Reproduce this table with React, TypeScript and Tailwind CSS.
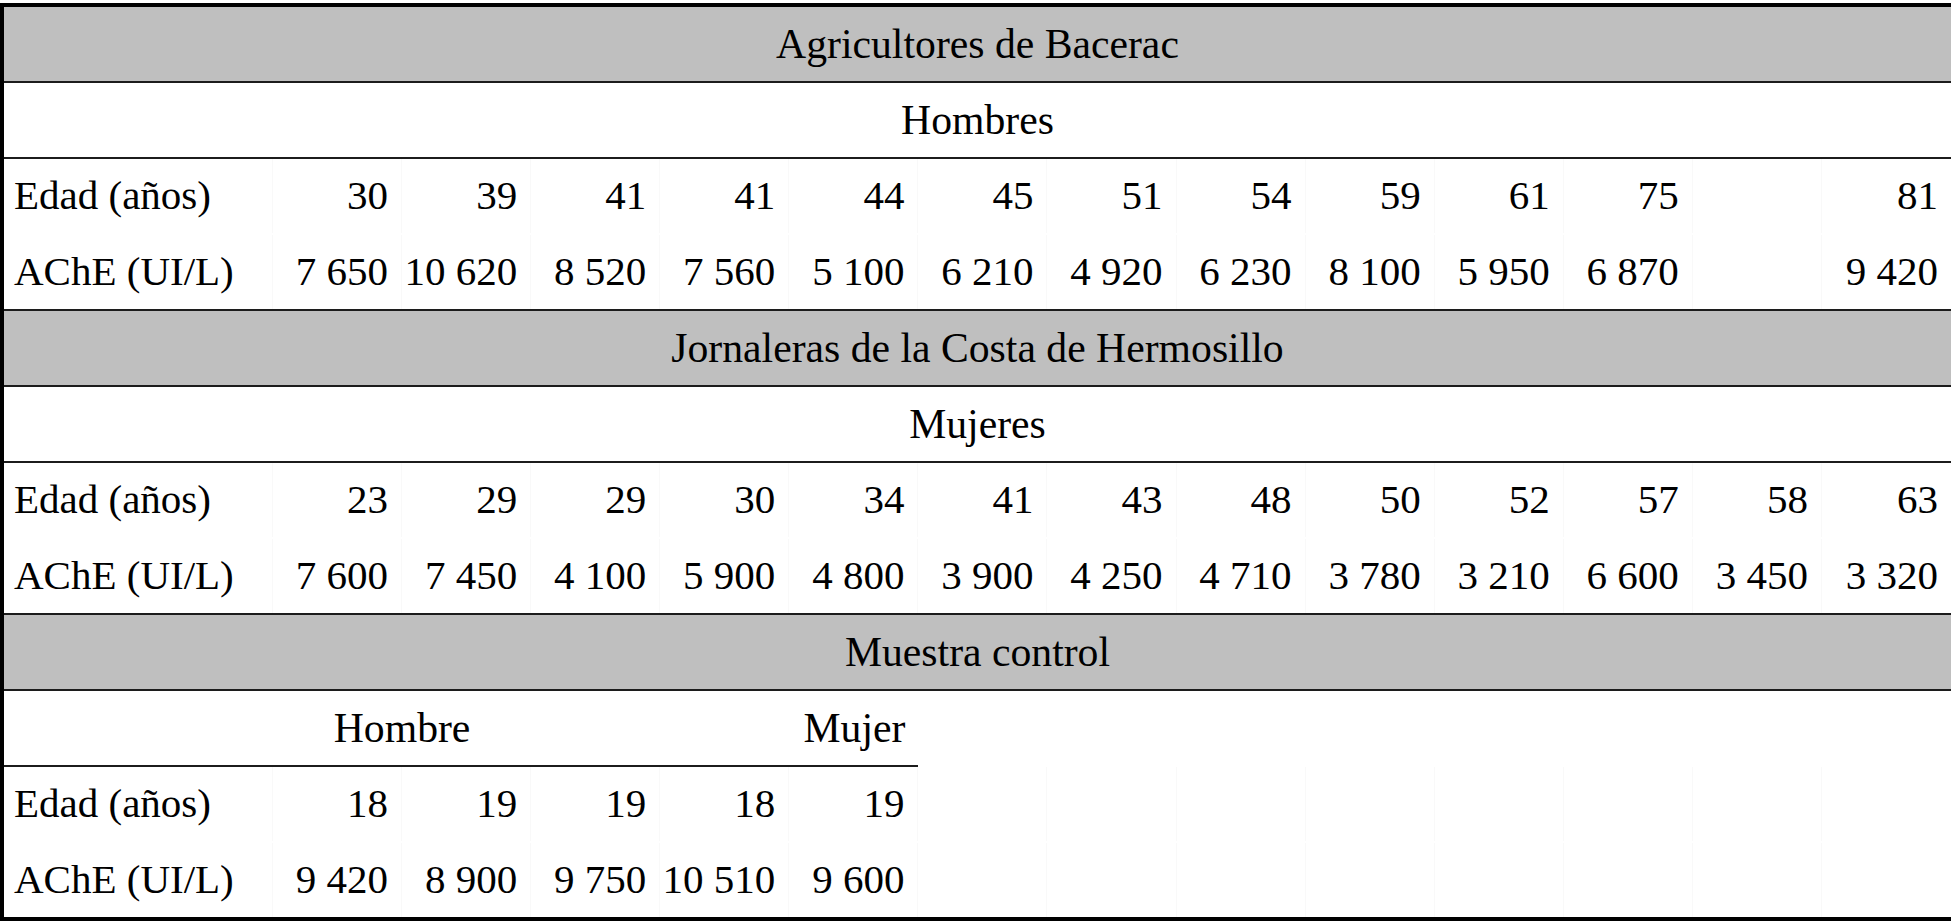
import React from "react";

const LINE = "border-[#1c1c1c]";

type Row = { label: string; values: (string | null)[] };

const agEdad: Row = {
  label: "Edad (años)",
  values: ["30", "39", "41", "41", "44", "45", "51", "54", "59", "61", "75", null, "81"],
};
const agAche: Row = {
  label: "AChE (UI/L)",
  values: ["7 650", "10 620", "8 520", "7 560", "5 100", "6 210", "4 920", "6 230", "8 100", "5 950", "6 870", null, "9 420"],
};
const joEdad: Row = {
  label: "Edad (años)",
  values: ["23", "29", "29", "30", "34", "41", "43", "48", "50", "52", "57", "58", "63"],
};
const joAche: Row = {
  label: "AChE (UI/L)",
  values: ["7 600", "7 450", "4 100", "5 900", "4 800", "3 900", "4 250", "4 710", "3 780", "3 210", "6 600", "3 450", "3 320"],
};
const coEdad: Row = {
  label: "Edad (años)",
  values: ["18", "19", "19", "18", "19", null, null, null, null, null, null, null, null],
};
const coAche: Row = {
  label: "AChE (UI/L)",
  values: ["9 420", "8 900", "9 750", "10 510", "9 600", null, null, null, null, null, null, null, null],
};

const GRID = "grid grid-cols-[269px_repeat(13,minmax(0,1fr))]";
const FONT = "font-['Liberation_Serif','Times_New_Roman',serif]";

function TitleRow({ text, gray }: { text: string; gray?: boolean }) {
  return (
    <div className={`${GRID} h-[76px] border-b-2 ${LINE} ${gray ? "bg-[#bfbfbf]" : "bg-white"}`}>
      <div className="col-span-14 flex items-center justify-center text-[41.7px]">{text}</div>
    </div>
  );
}

function DataRow({ row, border, last }: { row: Row; border?: boolean; last?: boolean }) {
  const h = last ? "h-[74px]" : "h-[76px]";
  const b = last ? "" : border ? "border-b-2 " + LINE : "border-b-2 border-transparent";
  return (
    <div className={`${GRID} ${h} ${b} bg-white text-[41px]`}>
      <div className="flex items-center pl-[10px] border-r border-[#f9f9f9]">{row.label}</div>
      {row.values.map((v, i) => (
        <div
          key={i}
          className="flex items-center justify-end pr-[13px] border-r border-[#f9f9f9] last:border-r-0 whitespace-nowrap"
        >
          {v ?? ""}
        </div>
      ))}
    </div>
  );
}

export default function App() {
  return (
    <div className={`w-[1951px] h-[923px] bg-white overflow-hidden text-black ${FONT}`}>
      <div className="mt-[3px] border-l-4 border-t-4 border-b-4 border-black">
        <TitleRow text="Agricultores de Bacerac" gray />
        <TitleRow text="Hombres" />
        <DataRow row={agEdad} />
        <DataRow row={agAche} border />
        <TitleRow text="Jornaleras de la Costa de Hermosillo" gray />
        <TitleRow text="Mujeres" />
        <DataRow row={joEdad} />
        <DataRow row={joAche} border />
        <TitleRow text="Muestra control" gray />
        <div className={`${GRID} h-[76px] bg-white text-[41.7px]`}>
          <div className={`border-b-2 ${LINE}`} />
          <div className={`col-span-2 flex items-center justify-center border-b-2 ${LINE}`}>Hombre</div>
          <div className={`col-span-3 flex items-center justify-end pr-[13px] border-b-2 ${LINE}`}>Mujer</div>
          <div className="col-span-8 border-b-2 border-transparent" />
        </div>
        <DataRow row={coEdad} />
        <DataRow row={coAche} last />
      </div>
    </div>
  );
}
